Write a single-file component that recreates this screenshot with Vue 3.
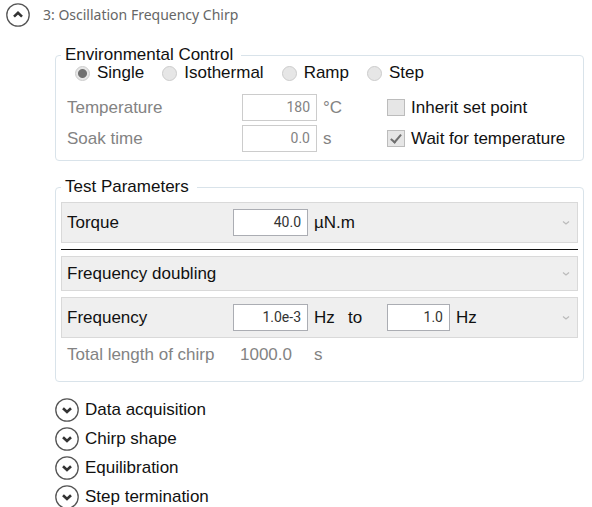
<script setup>
import { ref } from 'vue'

const modes = ['Single', 'Isothermal', 'Ramp', 'Step']
const mode = ref('Single')

const temperature = ref('180')
const soakTime = ref('0.0')
const inheritSetPoint = ref(false)
const waitForTemperature = ref(true)

const torque = ref('40.0')
const freqStart = ref('1.0e-3')
const freqEnd = ref('1.0')
const chirpLength = ref('1000.0')

const sections = ['Data acquisition', 'Chirp shape', 'Equilibration', 'Step termination']
</script>

<template>
  <main class="step">
    <button type="button" class="expander step-title">
      <svg class="circle" viewBox="0 0 24 24" aria-hidden="true">
        <circle cx="12" cy="12" r="11.2" />
        <path d="M8 13.6 L12 9.8 L16 13.6" />
      </svg>
      <span>3: Oscillation Frequency Chirp</span>
    </button>

    <div class="content">
      <fieldset class="group">
        <legend>Environmental Control</legend>

        <div class="modes">
          <label v-for="m in modes" :key="m">
            <input type="radio" name="mode" :value="m" v-model="mode" disabled>
            {{ m }}
          </label>
        </div>

        <div class="env-grid">
          <label class="muted" for="temperature">Temperature</label>
          <input id="temperature" class="value" type="text" v-model="temperature" disabled>
          <span class="unit muted">°C</span>
          <label class="check">
            <input type="checkbox" v-model="inheritSetPoint" disabled>
            Inherit set point
          </label>

          <label class="muted" for="soak">Soak time</label>
          <input id="soak" class="value" type="text" v-model="soakTime" disabled>
          <span class="unit muted">s</span>
          <label class="check">
            <input type="checkbox" v-model="waitForTemperature" disabled>
            Wait for temperature
          </label>
        </div>
      </fieldset>

      <fieldset class="group params">
        <legend>Test Parameters</legend>

        <div class="combo tall">
          <select aria-label="Controlled variable">
            <option>Torque</option>
          </select>
          <input class="value first" type="text" v-model="torque" aria-label="Torque">
          <span class="unit">µN.m</span>
          <svg class="chevron" viewBox="0 0 8 6" aria-hidden="true"><path d="M1 1.5 L4 4 L7 1.5" /></svg>
        </div>

        <hr>

        <div class="combo">
          <select aria-label="Sweep mode">
            <option>Frequency doubling</option>
          </select>
          <svg class="chevron" viewBox="0 0 8 6" aria-hidden="true"><path d="M1 1.5 L4 4 L7 1.5" /></svg>
        </div>

        <div class="combo tall">
          <select aria-label="Range variable">
            <option>Frequency</option>
          </select>
          <input class="value first" type="text" v-model="freqStart" aria-label="Start frequency">
          <span class="unit">Hz</span>
          <span class="to">to</span>
          <input class="value second" type="text" v-model="freqEnd" aria-label="End frequency">
          <span class="unit end">Hz</span>
          <svg class="chevron" viewBox="0 0 8 6" aria-hidden="true"><path d="M1 1.5 L4 4 L7 1.5" /></svg>
        </div>

        <div class="total muted">
          <span>Total length of chirp</span>
          <output>{{ chirpLength }}</output>
          <span>s</span>
        </div>
      </fieldset>

      <div class="sections">
        <button v-for="s in sections" :key="s" type="button" class="expander">
          <svg class="circle" viewBox="0 0 24 24" aria-hidden="true">
            <circle cx="12" cy="12" r="11.2" />
            <path d="M8 10.2 L12 14 L16 10.2" />
          </svg>
          <span>{{ s }}</span>
        </button>
      </div>
    </div>
  </main>
</template>

<style>
body {
  background: #fff;
  scrollbar-width: none;
}
</style>

<style scoped>
.step {
  padding: 3px 8px 0 6px;
  color: #111;
  font-family: "Liberation Sans", sans-serif;
  font-size: 17px;
  line-height: 18px;
}

.content {
  padding-left: 49px;
}

.expander {
  display: flex;
  align-items: center;
  gap: 6px;
  height: 29px;
  padding: 0;
  border: 0;
  background: none;
  color: inherit;
  font: inherit;
  white-space: nowrap;
}

.step-title {
  gap: 13px;
  height: 24px;
  margin-bottom: 19px;
  color: #666;
  font-family: "Noto Sans", sans-serif;
  font-size: 14px;
}

.circle {
  flex: none;
  width: 24px;
  height: 24px;
  fill: none;
  stroke: #555;
  stroke-width: 1.3;
}

.circle path {
  stroke: #333;
  stroke-width: 2.6;
}

.group {
  min-width: 0;
  margin: 0;
  padding: 0 5px;
  border: 1px solid #d9e3ea;
  border-radius: 4px;
}

legend {
  padding: 0 8px 0 4px;
}

.modes {
  display: flex;
  gap: 18px;
  padding-left: 14px;
}

.modes label,
.check {
  display: flex;
  align-items: center;
  gap: 7px;
  white-space: nowrap;
}

.modes input {
  appearance: none;
  width: 15px;
  height: 15px;
  margin: 0;
  border: 1px solid #ccc;
  border-radius: 50%;
  background: #e6e6e6;
}

.modes input:checked {
  background: radial-gradient(circle, #707070 4px, #e6e6e6 5px);
}

.env-grid {
  display: grid;
  grid-template-columns: 175px 75px 70px 1fr;
  align-items: center;
  row-gap: 4px;
  padding: 12px 0 8px 6px;
}

.check {
  gap: 6px;
}

.check input {
  appearance: none;
  position: relative;
  flex: none;
  width: 18px;
  height: 17px;
  margin: 0;
  border: 1px solid #bcbcbc;
  background: #e6e6e6;
}

.check input:checked::after {
  content: "";
  position: absolute;
  top: 1px;
  left: 5px;
  width: 4px;
  height: 9px;
  border: solid #707070;
  border-width: 0 2px 2px 0;
  transform: rotate(40deg);
}

.muted {
  color: #838383;
}

.unit {
  padding-left: 6px;
}

.value {
  box-sizing: border-box;
  width: 100%;
  height: 27px;
  padding: 0 6px 2px;
  border: 1px solid #abadb3;
  background: #fff;
  color: #333;
  font-family: Roboto, sans-serif;
  font-size: 14px;
  text-align: right;
}

.value:disabled {
  border-color: #ccc;
  color: #838383;
}

.params {
  margin-top: 17px;
  padding-bottom: 17px;
}

.combo {
  display: grid;
  grid-template-columns: 172px 75px 40px 39px 63px 1fr 16px;
  align-items: center;
  height: 35px;
  margin-top: 6px;
}

.combo.tall {
  height: 41px;
}

/* the select fills the row, the value boxes sit over it */
.combo select {
  grid-area: 1 / 1 / 2 / -1;
  appearance: none;
  width: 100%;
  height: 100%;
  padding: 1px 5px 0;
  border: 1px solid #d9d9d9;
  border-radius: 0;
  background: #efefef;
  color: inherit;
  font: inherit;
}

.combo > :not(select) {
  grid-row: 1;
  z-index: 1;
}

.first {
  grid-column: 2;
}

.combo .unit {
  grid-column: 3;
}

.to {
  grid-column: 4;
}

.second {
  grid-column: 5;
}

.combo .end {
  grid-column: 6;
}

.chevron {
  grid-column: 7;
  width: 8px;
  height: 6px;
  fill: none;
  stroke: #bbb;
  stroke-width: 1.3;
  pointer-events: none;
}

hr {
  height: 1px;
  margin: 6px 0 0;
  border: 0;
  background: #111;
}

.total {
  display: grid;
  grid-template-columns: 173px 74px 1fr;
  padding: 8px 0 0 6px;
}

.sections {
  padding-top: 13px;
}
</style>
